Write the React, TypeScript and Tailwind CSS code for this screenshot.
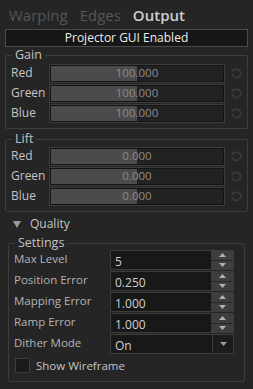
import React from 'react';

const font = { fontFamily: '"Open Sans", "Noto Sans", sans-serif' };

const ResetIcon: React.FC = () => (
  <svg width="13" height="13" viewBox="0 0 13 13" className="shrink-0">
    <path d="M3.4 3.4 A4.3 4.3 0 1 1 2.3 7.2" fill="none" stroke="#3a3a3a" strokeWidth="1.7" />
    <path d="M0.8 2.2 L5 2.3 L3.6 6 Z" fill="#3a3a3a" />
  </svg>
);

const SliderRow: React.FC<{ label: string; value: string }> = ({ label, value }) => (
  <div className="flex items-center h-5">
    <span className="w-[43px] pl-[5px] text-[12px] text-[#c4c4c4] leading-none">{label}</span>
    <div className="relative w-[176px] h-[19px] border border-[#3c3c3c] bg-[#141414] p-px">
      <div className="relative h-full w-full bg-[#222]">
        <div className="h-full w-1/2 bg-[#4b4b4b]" />
        <span className="absolute inset-0 flex items-center justify-center text-[11.5px] text-[#8c8c8c]">{value}</span>
      </div>
    </div>
    <div className="ml-[5px]"><ResetIcon /></div>
  </div>
);

const Group: React.FC<{ title: string; className?: string; children: React.ReactNode }> = ({ title, className, children }) => (
  <fieldset className={`border border-[#3d3d3d] rounded-[2px] ${className ?? ''}`}>
    <legend className="ml-[6px] px-[3px] text-[12.5px] leading-[12px] text-[#c4c4c4]">{title}</legend>
    {children}
  </fieldset>
);

const SpinRow: React.FC<{ label: string; value: string; combo?: boolean }> = ({ label, value, combo }) => (
  <div className="flex h-5">
    <span className="w-[101px] pl-[5px] pt-[1px] text-[11.5px] text-[#b4b4b4] leading-[15px]">{label}</span>
    <div className="flex w-[124px] h-5 border border-[#3c3c3c] bg-[#181818]">
      <span className="flex-1 pl-[4px] pt-[3px] text-[12px] text-[#d0d0d0] leading-[15px]">{value}</span>
      {combo ? (
        <div className="w-[21px] flex items-center justify-center border-l border-[#3c3c3c] bg-[#1c1c1c]">
          <svg width="7" height="4" viewBox="0 0 7 4"><path d="M0 0 L7 0 L3.5 4 Z" fill="#9a9a9a" /></svg>
        </div>
      ) : (
        <div className="w-[22px] flex flex-col">
          <div className="flex-1 flex items-center justify-center bg-[#3e3e3e] border-b border-[#262626]">
            <svg width="7" height="4" viewBox="0 0 7 4"><path d="M0 4 L7 4 L3.5 0 Z" fill="#b0b0b0" /></svg>
          </div>
          <div className="flex-1 flex items-center justify-center bg-[#3e3e3e]">
            <svg width="7" height="4" viewBox="0 0 7 4"><path d="M0 0 L7 0 L3.5 4 Z" fill="#b0b0b0" /></svg>
          </div>
        </div>
      )}
    </div>
  </div>
);

const App: React.FC = () => {
  return (
    <div className="w-[253px] h-[389px] bg-[#252525] overflow-hidden" style={font}>
      <div className="flex items-end gap-[12px] pl-[9px] h-[24px] text-[15px] leading-[18px]">
        <span className="text-[#565656]">Warping</span>
        <span className="text-[#565656]">Edges</span>
        <span className="text-[#cfcfcf] font-semibold">Output</span>
      </div>
      <div className="mx-[5px] mt-[5px] h-[18px] border border-[#4a4a4a] bg-[#161616] flex items-center justify-center text-[12px] text-[#ededed]">
        Projector GUI Enabled
      </div>
      <Group title="Gain" className="mx-[5px] mt-[2px] pb-[5px]">
        <div className="mt-[2px]">
          <SliderRow label="Red" value="100.000" />
          <SliderRow label="Green" value="100.000" />
          <SliderRow label="Blue" value="100.000" />
        </div>
      </Group>
      <Group title="Lift" className="mx-[5px] mt-[4px] pb-[5px]">
        <div className="mt-[1px]">
          <SliderRow label="Red" value="0.000" />
          <SliderRow label="Green" value="0.000" />
          <SliderRow label="Blue" value="0.000" />
        </div>
      </Group>
      <div className="flex items-center h-[24px] pl-[13px] text-[12px] text-[#c4c4c4]">
        <svg width="8" height="7" viewBox="0 0 8 7"><path d="M0 0 L8 0 L4 7 Z" fill="#9a9a9a" /></svg>
        <span className="ml-[9px]">Quality</span>
      </div>
      <Group title="Settings" className="mx-[8px] mt-[1px] pb-[8px]">
        <div className="mt-[1px] flex flex-col gap-px">
          <SpinRow label="Max Level" value="5" />
          <SpinRow label="Position Error" value="0.250" />
          <SpinRow label="Mapping Error" value="1.000" />
          <SpinRow label="Ramp Error" value="1.000" />
          <SpinRow label="Dither Mode" value="On" combo />
        </div>
        <div className="flex items-center h-[15px] mt-[4px] ml-[6px]">
          <div className="w-[15px] h-[15px] border border-[#3c3c3c] bg-[#1a1a1a]" />
          <span className="ml-[6px] text-[11.5px] text-[#c4c4c4]">Show Wireframe</span>
        </div>
      </Group>
    </div>
  );
};

export default App;
